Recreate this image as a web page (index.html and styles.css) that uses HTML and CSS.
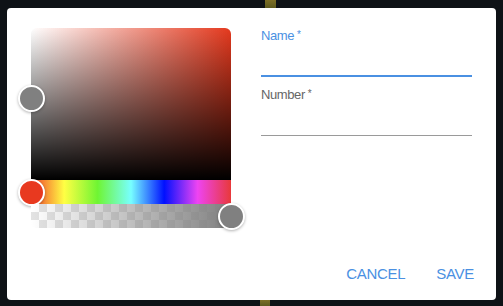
FILE: index.html
```html
<!DOCTYPE html>
<html lang="en">
<head>
  <meta charset="UTF-8" />
  <meta name="viewport" content="width=device-width, initial-scale=1" />
  <title>Pick a colour</title>
  <link rel="stylesheet" href="styles.css">
</head>
<body>
  <span class="stripe stripe-top"></span>
  <span class="stripe stripe-bottom"></span>
  <div class="dialog">
    <div class="content">
      <div class="picker">
        <div class="saturation">
          <span class="handle handle-sat"></span>
        </div>
        <div class="hue">
          <span class="handle handle-hue"></span>
        </div>
        <div class="alpha">
          <span class="handle handle-alpha"></span>
        </div>
      </div>
      <form class="fields">
        <div class="field focused">
          <label for="name">Name<sup>*</sup></label>
          <input type="text" id="name" />
        </div>
        <div class="field">
          <label for="number">Number<sup>*</sup></label>
          <input type="text" id="number" />
        </div>
      </form>
    </div>
    <div class="actions">
      <button type="button">Cancel</button>
      <button type="button">Save</button>
    </div>
  </div>
</body>
</html>
```

FILE: styles.css
```css
* { box-sizing: border-box; }
body { margin: 0; height: 306px; background: #0e1216; font-family: "Liberation Sans", Arial, sans-serif; position: relative; overflow: hidden; padding: 8px 7px 0; }
.stripe { position: absolute; width: 11px; height: 8px; background: linear-gradient(#7d6f26, #5d5a1e); }
.stripe-top { left: 265px; top: 0; }
.stripe-bottom { left: 260px; bottom: 0; height: 6px; width: 10px; }

.dialog { position: relative; width: 489px; height: 292px; background: #fff; border-radius: 4px; display: flex; flex-direction: column; }
.content { display: flex; gap: 30px; padding: 20px 24px 0; }

.picker { width: 200px; position: relative; }
.saturation { height: 152px; border-radius: 6px 6px 0 0; position: relative; background: linear-gradient(to top, #000, rgba(0,0,0,0)), linear-gradient(to right, #fff, #e4391e); }
.hue { height: 24px; position: relative; background: linear-gradient(to right, #f23a2a, #ffff44 16.6%, #6ff533 33.3%, #77ffff 50%, #0010ff 66.6%, #ee44f2 83.3%, #e8393a); }
.alpha { height: 24px; position: relative; border-radius: 0 0 6px 6px; background: linear-gradient(to right, rgba(128,128,128,0), #808080), repeating-conic-gradient(#e3e3e3 0 25%, #fff 0 50%) 0 0 / 16px 16px; }

.handle { position: absolute; width: 27px; height: 27px; border-radius: 50%; background: #808080; border: 2px solid #fff; box-shadow: 0 1px 3px rgba(0,0,0,0.3); }
.handle-sat { left: -13px; top: 57px; }
.handle-hue { left: -13px; top: -1px; background: #e8391f; }
.handle-alpha { right: -14px; top: -1px; }

.fields { flex: 1; margin: 0; }
.field { margin-bottom: 10px; }
.field label { display: block; font-size: 13px; line-height: 15px; color: #666; letter-spacing: -0.4px; }
.field sup { font-size: 10px; vertical-align: 0; position: relative; top: -2px; margin-left: 3px; }
.field input { display: block; width: 100%; height: 33px; border: none; border-bottom: 1px solid #9a9a9a; outline: none; padding: 0; font: inherit; }
.field.focused label { color: #4a90e2; }
.field.focused input { height: 33px; border-bottom: 2px solid #4a90e2; }

.actions { margin-top: auto; display: flex; justify-content: flex-end; gap: 15px; padding: 0 14px 9px; }
.actions button { height: 36px; padding: 0 8px; border: none; background: none; color: #4a90e2; font-family: inherit; font-size: 15px; letter-spacing: -0.3px; text-transform: uppercase; cursor: pointer; }
```
